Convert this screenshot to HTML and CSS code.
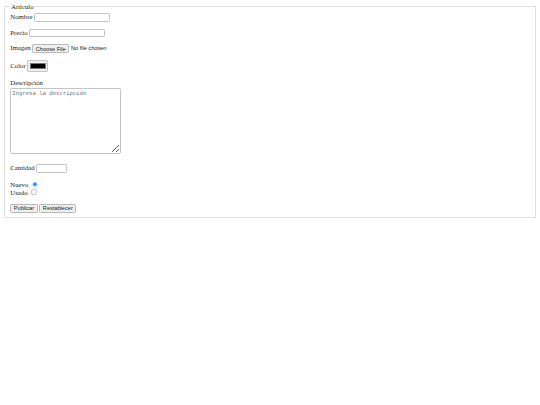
FILE: index.html
```html
<!DOCTYPE html>
<html>
<head>
<meta charset="utf-8">
<link rel="stylesheet" href="styles.css">
</head>
<body>
<form>
<fieldset class="group">
<legend>Artículo</legend>
<label for="nombre">Nombre</label> <input type="text" id="nombre" class="field"><br><br>
<label for="precio">Precio</label> <input type="text" id="precio" class="field"><br><br>
<label for="imagen">Imagen</label> <input type="file" id="imagen" class="file"><br><br>
<label for="color">Color</label> <input type="color" id="color" class="swatch"><br><br>
<label for="desc">Descripción</label><br>
<textarea id="desc" class="field desc" cols="27" rows="10" placeholder="Ingresa la descripción"></textarea><br><br>
<label for="cant">Cantidad</label> <input type="number" id="cant" class="field qty"><br><br>
<label for="nuevo">Nuevo</label> <input type="radio" name="estado" id="nuevo" class="opt" checked><br>
<label for="usado">Usado</label> <input type="radio" name="estado" id="usado" class="opt"><br><br>
<span class="actions"><input type="submit" value="Publicar" class="btn"> <input type="reset" value="Restablecer" class="btn"></span>
</fieldset>
</form>
</body>
</html>
```
FILE: styles.css
```css
html { zoom: 0.421875; }
body { font-family: "Liberation Serif", serif; color: #222; }
.group { border: 2px solid #e0e0e0; }
.field { border: 2px solid #c4c4c4; border-radius: 3px; }
.desc { height: 147px; margin: 6px 0 6px; }
.qty { width: 63px; }
.opt { margin-top: 3px; }
.btn, .file::file-selector-button {
  background: #efefef;
  border: 2px solid #b8b8b8;
  border-radius: 3px;
  padding: 1px 6px;
  color: #222;
}
.actions { display: inline-block; margin-top: 3px; }
.swatch { border: 2px solid #c4c4c4; border-radius: 3px; background: #efefef; }
```
